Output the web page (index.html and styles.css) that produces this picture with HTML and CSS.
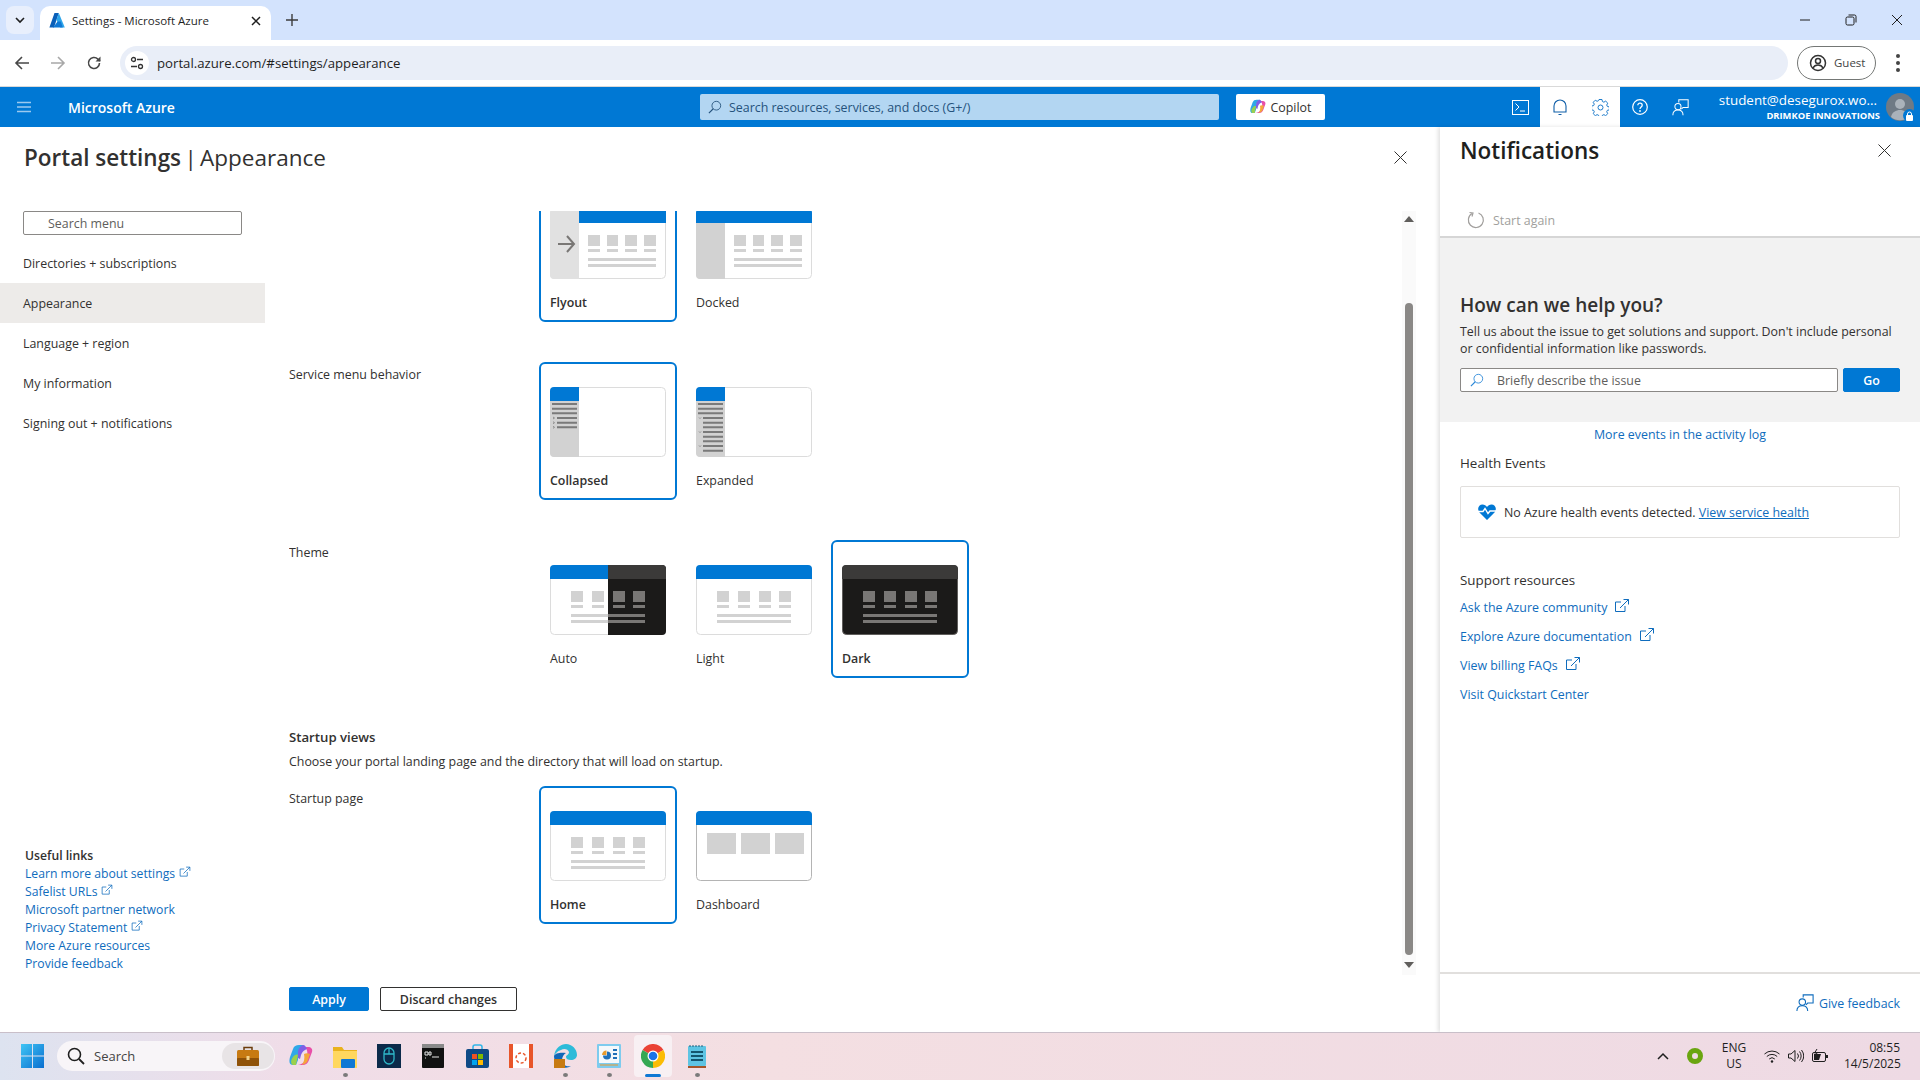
FILE: index.html
```html
<!DOCTYPE html>
<html lang="en">
<head>
  <meta charset="UTF-8">
  <title>Settings - Microsoft Azure</title>
  <link rel="stylesheet" href="styles.css">
</head>
<body>
  <svg class="defs" width="0" height="0">
    <symbol id="ext" viewBox="0 0 16 16">
      <path d="M11 8v5.5H1.5V4H7" fill="none" stroke="currentColor"/>
      <path d="M6 10 14.5 1.5M9.5 1.5h5v5" fill="none" stroke="currentColor"/>
    </symbol>
    <symbol id="lens" viewBox="0 0 16 16">
      <circle cx="9.5" cy="6.5" r="5" fill="none" stroke="currentColor"/>
      <path d="M6 10 1 15" fill="none" stroke="currentColor" stroke-width="1.3"/>
    </symbol>
    <symbol id="feedback" viewBox="0 0 20 20">
      <path d="M8 4V1h11v9h-6l-2 2" fill="none" stroke="currentColor" stroke-width="1.2"/>
      <circle cx="7" cy="9" r="3.6" fill="none" stroke="currentColor" stroke-width="1.2"/>
      <path d="M1 19c0-4 2.500-6 6-6s6 2 6 6" fill="none" stroke="currentColor" stroke-width="1.2"/>
    </symbol>
    <symbol id="copilot" viewBox="0 0 24 24">
      <path d="M10 1h5c-5 3-6 8-6 15l-2 5H4C0 21 0 17 1 13l3-8c1-3 3-4 6-4z" fill="#2fa8e8"/>
      <path d="M7 21h6c4 0 6-2 7-5l3-8c1-3-1-5-4-5h-3c3 3 3 8 1 12-2 4-5 6-10 6z" fill="#e84fa8"/>
      <path d="M9 9c0-4 2-7 5-8 2 0 3 2 4 4-3 1-5 3-6 6l-1 4-2-1z" fill="#7f5fe6"/>
      <path d="M4 13c1-2 4-3 5-2l-2 10H4c-3-1-2-6 0-8z" fill="#9bd04c"/>
      <path d="M15 10c2-1 4-1 6 0l-2 6c-1 3-3 4-6 5 2-3 3-7 2-11z" fill="#f4a63a"/>
    </symbol>

    <symbol id="blocks" viewBox="0 0 116 70">
      <path d="M21 26h12v11H21zM42 26h12v11H42zM63 26h12v11H63zM83 26h12v11H83zM21 40h12v3H21zM42 40h12v3H42zM63 40h12v3H63zM83 40h12v3H83zM21 49h74v3H21zM21 55h74v3H21z" fill="#d2d2d2"/>
    </symbol>
    <symbol id="blocks-side" viewBox="0 0 116 70">
      <path d="M38 26h12v11H38zM57 26h11v11H57zM75 26h12v11H75zM94 26h12v11H94zM38 40h12v3H38zM57 40h11v3H57zM75 40h12v3H75zM94 40h12v3H94zM38 49h68v3H38zM38 55h68v3H38z" fill="#d2d2d2"/>
    </symbol>
  </svg>

  <div class="page">
    <div class="tabstrip">
      <div class="tab-search">
        <svg width="12" height="12" viewBox="0 0 12 12"><path d="M2 4l4 4 4-4" fill="none" stroke="#1f1f1f" stroke-width="1.6"/></svg>
      </div>
      <div class="tab">
        <svg class="tab-icon" width="16" height="15" viewBox="0 0 16 15">
          <path d="M5.500 0h4.300L5 14.500H.4z" fill="#0a5fb8"/>
          <path d="M9.800 0 15.800 14.500h-4.600L7.400 6.800z" fill="#2fa6ea"/>
          <path d="M8.600 8.500h3.200l2 6H4z" fill="#0f78d4"/>
        </svg>
        <span class="tab-title">Settings - Microsoft Azure</span>
        <svg width="10" height="10" viewBox="0 0 10 10"><path d="M1 1l8 8M9 1 1 9" stroke="#1f1f1f" stroke-width="1.500"/></svg>
      </div>
      <svg class="new-tab" width="12" height="12" viewBox="0 0 12 12"><path d="M6 0v12M0 6h12" stroke="#3c3c3c" stroke-width="1.400"/></svg>
      <div class="win-buttons">
        <svg width="12" height="12" viewBox="0 0 12 12"><path d="M1 6h10" stroke="#1f1f1f"/></svg>
        <svg width="12" height="12" viewBox="0 0 12 12"><rect x="1" y="3" width="8" height="8" rx="1.500" fill="none" stroke="#1f1f1f"/><path d="M3.500 1H9.500a1.500 1.500 0 0 1 1.500 1.500V8.500" fill="none" stroke="#1f1f1f"/></svg>
        <svg width="12" height="12" viewBox="0 0 12 12"><path d="M1 1l10 10M11 1 1 11" stroke="#1f1f1f"/></svg>
      </div>
    </div>

    <div class="toolbar">
      <svg class="nav-btn" width="16" height="16" viewBox="0 0 16 16"><path d="M15 8H2M8 2 2 8l6 6" fill="none" stroke="#474747" stroke-width="1.600"/></svg>
      <svg class="nav-btn" width="16" height="16" viewBox="0 0 16 16"><path d="M1 8h13M8 2l6 6-6 6" fill="none" stroke="#a8a8a8" stroke-width="1.600"/></svg>
      <svg class="nav-btn" width="16" height="16" viewBox="0 0 16 16"><path d="M13.500 8a5.500 5.500 0 1 1-1.600-3.900L14 6" fill="none" stroke="#474747" stroke-width="1.600"/><path d="M14.500 1.500V6.500H9.500z" fill="#474747"/></svg>
      <div class="omnibox">
        <div class="site-icon">
          <svg width="14" height="14" viewBox="0 0 14 14"><circle cx="3.500" cy="3.500" r="2" fill="none" stroke="#333" stroke-width="1.300"/><path d="M7 3.500h6M1 10.500h6" stroke="#333" stroke-width="1.300"/><circle cx="10.500" cy="10.500" r="2" fill="none" stroke="#333" stroke-width="1.300"/></svg>
        </div>
        <span class="url">portal.azure.com/#settings/appearance</span>
      </div>
      <div class="guest">
        <svg width="18" height="18" viewBox="0 0 18 18"><circle cx="9" cy="9" r="7.500" fill="none" stroke="#333" stroke-width="1.500"/><circle cx="9" cy="7" r="2.500" fill="none" stroke="#333" stroke-width="1.500"/><path d="M4 14c1-2 3-3 5-3s4 1 5 3" fill="none" stroke="#333" stroke-width="1.500"/></svg>
        <span>Guest</span>
      </div>
      <div class="kebab"><i></i><i></i><i></i></div>
    </div>

    <header class="portal-bar">
      <svg class="burger" width="14" height="12" viewBox="0 0 14 12"><path d="M0 1.500h14M0 6h14M0 10.500h14" stroke="#9cc9ef" stroke-width="1.500"/></svg>
      <span class="brand">Microsoft Azure</span>
      <div class="global-search">
        <svg class="lens" width="14" height="14"><use href="#lens"/></svg>
        <span>Search resources, services, and docs (G+/)</span>
      </div>
      <div class="copilot-btn">
        <svg width="16" height="16"><use href="#copilot"/></svg>
        <span>Copilot</span>
      </div>
      <div class="bar-icons">
        <div class="bar-icon">
          <svg width="17" height="15" viewBox="0 0 17 15"><rect x=".5" y=".5" width="16" height="14" fill="none" stroke="#fff"/><path d="M3.500 3.500 7 7l-3.500 3.500M8 11h5" fill="none" stroke="#fff"/></svg>
        </div>
        <div class="bar-icon active">
          <svg width="14" height="17" viewBox="0 0 14 17"><path d="M1 13V7a6 6 0 0 1 12 0v6zM.5 13h13M5.500 15.500h3" fill="none" stroke="#0f5ea8" stroke-width="1.100"/></svg>
        </div>
        <div class="bar-icon active">
          <svg width="17" height="17" viewBox="0 0 17 17"><path d="M7 .5h3l.4 2 1.500.7 1.800-1.100 2.100 2.100-1.100 1.800.7 1.500 2 .4v3l-2 .4-.7 1.500 1.100 1.800-2.100 2.100-1.800-1.100-1.500.7-.4 2H7l-.4-2-1.500-.7-1.800 1.100-2.100-2.100 1.100-1.800-.7-1.500-2-.4V7l2-.4.7-1.500L1.200 3.300l2.100-2.100 1.800 1.100 1.500-.7z" fill="none" stroke="#1f7ccb"/><circle cx="8.500" cy="8.500" r="2.500" fill="none" stroke="#1f7ccb"/></svg>
        </div>
        <div class="bar-icon">
          <svg width="16" height="16" viewBox="0 0 16 16"><circle cx="8" cy="8" r="7.300" fill="none" stroke="#fff" stroke-width="1.200"/><path d="M5.800 6.200C5.800 3.500 10.200 3.500 10.200 6.200 10.200 8 8 8 8 10" fill="none" stroke="#fff" stroke-width="1.300"/><circle cx="8" cy="12" r=".9" fill="#fff"/></svg>
        </div>
        <div class="bar-icon">
          <svg width="17" height="17"><use href="#feedback"/></svg>
        </div>
      </div>
      <div class="account">
        <div class="account-text">
          <div class="account-mail">student@desegurox.wo...</div>
          <div class="account-org">DRIMKOE INNOVATIONS</div>
        </div>
        <div class="avatar">
          <svg width="28" height="28" viewBox="0 0 28 28"><circle cx="14" cy="14" r="14" fill="#6f7a85"/><circle cx="14" cy="11" r="5" fill="#aab2ba"/><path d="M5 24c1-5 5-7 9-7s8 2 9 7a14 14 0 0 1-18 0z" fill="#aab2ba"/></svg>
          <div class="lock">
            <svg width="9" height="10" viewBox="0 0 9 10"><rect x="1" y="4" width="7" height="6" rx="1" fill="#fff"/><path d="M2.500 4V3a2 2 0 0 1 4 0v1" fill="none" stroke="#fff"/></svg>
          </div>
        </div>
      </div>
    </header>

    <main class="workspace">
      <section class="blade">
        <div class="blade-head">
          <h1 class="blade-title"><b>Portal settings</b> | Appearance</h1>
          <svg class="blade-close" width="13" height="13" viewBox="0 0 13 13"><path d="M.5.500l12 12M12.500.500l-12 12" stroke="#323130"/></svg>
        </div>
        <div class="blade-body">
          <nav class="side">
            <div class="menu-search">Search menu</div>
            <a class="menu-item">Directories + subscriptions</a>
            <a class="menu-item selected">Appearance</a>
            <a class="menu-item">Language + region</a>
            <a class="menu-item">My information</a>
            <a class="menu-item">Signing out + notifications</a>
            <div class="useful">
              <div class="useful-title">Useful links</div>
              <a>Learn more about settings <svg width="12" height="12"><use href="#ext"/></svg></a>
              <a>Safelist URLs <svg width="12" height="12"><use href="#ext"/></svg></a>
              <a>Microsoft partner network</a>
              <a>Privacy Statement <svg width="12" height="12"><use href="#ext"/></svg></a>
              <a>More Azure resources</a>
              <a>Provide feedback</a>
            </div>
          </nav>

          <div class="content">
            <div class="scroller">
              <div class="scroll-inner">
                <div class="setting-row first">
                  <div class="setting-label"></div>
                  <div class="option on">
                    <svg class="thumb" viewBox="0 0 116 70">
                      <rect x=".5" y=".5" width="115" height="69" rx="4" fill="#fff" stroke="#dcdcdc"/>
                      <path d="M4 0h25v70H4a4 4 0 0 1-4-4V4a4 4 0 0 1 4-4z" fill="#e1e1e1"/>
                      <path d="M29 0h87v14H29z" fill="#0078d4"/>
                      <path d="M8 35h16M17 27l7 8-7 8" fill="none" stroke="#797775" stroke-width="2"/>
                      <use href="#blocks-side"/>
                    </svg>
                    <div class="option-name">Flyout</div>
                  </div>
                  <div class="option">
                    <svg class="thumb" viewBox="0 0 116 70">
                      <rect x=".5" y=".5" width="115" height="69" rx="4" fill="#fff" stroke="#dcdcdc"/>
                      <path d="M0 14h29v56H4a4 4 0 0 1-4-4z" fill="#d2d2d2"/>
                      <path d="M4 0h108a4 4 0 0 1 4 4v10H0V4a4 4 0 0 1 4-4z" fill="#0078d4"/>
                      <use href="#blocks-side"/>
                    </svg>
                    <div class="option-name">Docked</div>
                  </div>
                </div>

                <div class="setting-row">
                  <div class="setting-label">Service menu behavior</div>
                  <div class="option on">
                    <svg class="thumb" viewBox="0 0 116 70">
                      <rect x=".5" y=".5" width="115" height="69" rx="4" fill="#fff" stroke="#dcdcdc"/>
                      <path d="M0 14h29v56H4a4 4 0 0 1-4-4z" fill="#d2d2d2"/>
                      <path d="M4 0h25v14H0V4a4 4 0 0 1 4-4z" fill="#0078d4"/>
                      <path d="M2 17h25M2 21.700h25M2 26.300h25M7 31h20M7 35.700h20M7 40.300h20" stroke="#7a7a7a" stroke-width="2"/>
                      <path d="M3 30l1.500 1L3 32M3 34.700l1.500 1-1.500 1M3 39.300l1.500 1-1.500 1" fill="none" stroke="#7a7a7a" stroke-width=".8"/>
                    </svg>
                    <div class="option-name">Collapsed</div>
                  </div>
                  <div class="option">
                    <svg class="thumb" viewBox="0 0 116 70">
                      <rect x=".5" y=".5" width="115" height="69" rx="4" fill="#fff" stroke="#dcdcdc"/>
                      <path d="M0 14h29v56H4a4 4 0 0 1-4-4z" fill="#d2d2d2"/>
                      <path d="M4 0h25v14H0V4a4 4 0 0 1 4-4z" fill="#0078d4"/>
                      <path d="M2 17h25M2 21.700h25M2 26.300h25M7 31h20M7 35.700h20M7 40.300h20M7 45h20M7 49.700h20M7 54.300h20M7 59h20M7 63.700h20" stroke="#7a7a7a" stroke-width="2"/>
                      <path d="M3 30.500l1 1 1-1M3 44.500l1 1 1-1M3 58.500l1 1 1-1" fill="none" stroke="#7a7a7a" stroke-width=".8"/>
                    </svg>
                    <div class="option-name">Expanded</div>
                  </div>
                </div>

                <div class="setting-row">
                  <div class="setting-label">Theme</div>
                  <div class="option">
                    <svg class="thumb" viewBox="0 0 116 70">
                      <rect x=".5" y=".5" width="115" height="69" rx="4" fill="#fff" stroke="#dcdcdc"/>
                      <path d="M4 0h54v14H0V4a4 4 0 0 1 4-4z" fill="#0078d4"/>
                      <use href="#blocks"/>
                      <path d="M58 0h54a4 4 0 0 1 4 4v62a4 4 0 0 1-4 4H58z" fill="#1b1a19"/>
                      <path d="M58 0h54a4 4 0 0 1 4 4v10H58z" fill="#3b3a39"/>
                      <path d="M63 26h12v11H63zM83 26h12v11H83zM63 40h12v3H63zM83 40h12v3H83zM58 49h37v3H58zM58 55h37v3H58z" fill="#797775"/>
                    </svg>
                    <div class="option-name">Auto</div>
                  </div>
                  <div class="option">
                    <svg class="thumb" viewBox="0 0 116 70">
                      <rect x=".5" y=".5" width="115" height="69" rx="4" fill="#fff" stroke="#dcdcdc"/>
                      <path d="M4 0h108a4 4 0 0 1 4 4v10H0V4a4 4 0 0 1 4-4z" fill="#0078d4"/>
                      <use href="#blocks"/>
                    </svg>
                    <div class="option-name">Light</div>
                  </div>
                  <div class="option on">
                    <svg class="thumb" viewBox="0 0 116 70">
                      <rect x=".5" y=".5" width="115" height="69" rx="4" fill="#1b1a19" stroke="#605e5c"/>
                      <path d="M4 0h108a4 4 0 0 1 4 4v10H0V4a4 4 0 0 1 4-4z" fill="#3b3a39"/>
                      <path d="M21 26h12v11H21zM42 26h12v11H42zM63 26h12v11H63zM83 26h12v11H83zM21 40h12v3H21zM42 40h12v3H42zM63 40h12v3H63zM83 40h12v3H83zM21 49h74v3H21zM21 55h74v3H21z" fill="#797775"/>
                    </svg>
                    <div class="option-name">Dark</div>
                  </div>
                </div>

                <h3 class="section-title">Startup views</h3>
                <p class="section-desc">Choose your portal landing page and the directory that will load on startup.</p>

                <div class="setting-row">
                  <div class="setting-label">Startup page</div>
                  <div class="option on">
                    <svg class="thumb" viewBox="0 0 116 70">
                      <rect x=".5" y=".5" width="115" height="69" rx="4" fill="#fff" stroke="#dcdcdc"/>
                      <path d="M4 0h108a4 4 0 0 1 4 4v10H0V4a4 4 0 0 1 4-4z" fill="#0078d4"/>
                      <use href="#blocks"/>
                    </svg>
                    <div class="option-name">Home</div>
                  </div>
                  <div class="option">
                    <svg class="thumb" viewBox="0 0 116 70">
                      <rect x=".5" y=".5" width="115" height="69" rx="4" fill="#fff" stroke="#b4b4b4"/>
                      <path d="M4 0h108a4 4 0 0 1 4 4v10H0V4a4 4 0 0 1 4-4z" fill="#0078d4"/>
                      <path d="M11 22h29v21H11zM45 22h29v21H45zM79 22h29v21H79z" fill="#d2d2d2"/>
                    </svg>
                    <div class="option-name">Dashboard</div>
                  </div>
                </div>
              </div>
              <div class="scrollbar">
                <div class="arrow-up"></div>
                <div class="thumb-bar"></div>
                <div class="arrow-down"></div>
              </div>
            </div>
            <div class="actions">
              <button class="btn primary">Apply</button>
              <button class="btn">Discard changes</button>
            </div>
          </div>
        </div>
      </section>

      <aside class="notifications">
        <div class="notif-head">
          <div class="notif-top">
            <h2>Notifications</h2>
            <svg width="13" height="13" viewBox="0 0 13 13"><path d="M.5.500l12 12M12.500.500l-12 12" stroke="#323130"/></svg>
          </div>
          <div class="start-again">
            <svg width="18" height="18" viewBox="0 0 18 18"><path d="M11.500 2A7.500 7.500 0 1 1 5 2.600" fill="none" stroke="#a19f9d" stroke-width="1.200"/><path d="M2.500 1.500 6 2 5 5.500" fill="none" stroke="#a19f9d" stroke-width="1.200"/></svg>
            <span>Start again</span>
          </div>
        </div>
        <div class="help">
          <h3>How can we help you?</h3>
          <p>Tell us about the issue to get solutions and support. Don't include personal or confidential information like passwords.</p>
          <div class="help-form">
            <div class="help-input">
              <svg class="lens-blue" width="14" height="14"><use href="#lens"/></svg>
              <span>Briefly describe the issue</span>
            </div>
            <button class="btn primary go">Go</button>
          </div>
        </div>
        <div class="notif-body">
          <a class="more-events">More events in the activity log</a>
          <h4 class="first-h">Health Events</h4>
          <div class="health-box">
            <svg width="18" height="16" viewBox="0 0 18 16"><path d="M9 16 1.500 8.500C-1.500 4.500 1 .5 4.500.5 6.500.5 8 1.500 9 3c1-1.500 2.500-2.500 4.500-2.500 3.500 0 6 4 3 8z" fill="#0078d4"/><path d="M0 7.500h5l2-3 3 5 2-2.500h6" fill="none" stroke="#fff" stroke-width="1.400"/></svg>
            <span>No Azure health events detected. <a class="underlined">View service health</a></span>
          </div>
          <h4 class="support-h">Support resources</h4>
          <a class="support-link">Ask the Azure community <svg width="16" height="16"><use href="#ext"/></svg></a>
          <a class="support-link">Explore Azure documentation <svg width="16" height="16"><use href="#ext"/></svg></a>
          <a class="support-link">View billing FAQs <svg width="16" height="16"><use href="#ext"/></svg></a>
          <a class="support-link">Visit Quickstart Center</a>
        </div>
        <div class="notif-foot">
          <svg width="18" height="18"><use href="#feedback"/></svg>
          <span>Give feedback</span>
        </div>
      </aside>
    </main>

    <footer class="taskbar">
      <svg class="start" width="23" height="24" viewBox="0 0 23 24">
        <defs><linearGradient id="win" x1="0" y1="0" x2="1" y2="1"><stop offset="0" stop-color="#3fc4f4"/><stop offset="1" stop-color="#0a6fd0"/></linearGradient></defs>
        <path d="M0 0h11v11.500H0zM12 0h11v11.500H12zM0 12.500h11V24H0zM12 12.500h11V24H12z" fill="url(#win)"/>
      </svg>
      <div class="task-search">
        <svg width="18" height="18" viewBox="0 0 18 18"><circle cx="7.500" cy="7.500" r="6" fill="none" stroke="#1f1f1f" stroke-width="1.600"/><path d="M12 12l5 5" stroke="#1f1f1f" stroke-width="1.800"/></svg>
        <span>Search</span>
        <div class="case">
          <svg width="22" height="22" viewBox="0 0 22 22"><path d="M7 6V2.500h8V6" fill="none" stroke="#6b3d0c" stroke-width="1.500"/><rect y="5" width="22" height="16" rx="1.500" fill="#c77a12"/><rect y="13" width="22" height="8" rx="1" fill="#8f5208"/><rect x="9.500" y="11" width="3" height="4" fill="#f3d28a"/></svg>
        </div>
      </div>
      <div class="task-icons">
        <div class="task-icon"><svg width="24" height="24"><use href="#copilot"/></svg></div>
        <div class="task-icon dot">
          <svg width="24" height="24" viewBox="0 0 24 24"><path d="M0 3h9l2 3h13v17H0z" fill="#e9b21d"/><path d="M0 7h24v17H0z" fill="#ffd75e"/><rect x="8" y="15" width="14" height="9" rx="1" fill="#0f78d4"/></svg>
        </div>
        <div class="task-icon">
          <svg width="24" height="24" viewBox="0 0 24 24"><rect width="24" height="24" fill="#0b2a4a"/><rect x="7" y="4" width="10" height="16" rx="5" fill="none" stroke="#2fb8c9" stroke-width="1.300"/><path d="M12 4v6M7 10h10" stroke="#2fb8c9" stroke-width="1.300"/></svg>
        </div>
        <div class="task-icon">
          <svg width="22" height="24" viewBox="0 0 22 24"><rect width="22" height="24" rx="1" fill="#111"/><rect width="22" height="4" fill="#8a8a8a"/><path d="M3 8h3v3H3zM7 8h2v3H7zM3 14h1M10 13h7" stroke="#e6e6e6" fill="none"/></svg>
        </div>
        <div class="task-icon">
          <svg width="23" height="24" viewBox="0 0 23 24"><path d="M7 6V3a2 2 0 0 1 2-2h5a2 2 0 0 1 2 2v3" fill="none" stroke="#31b5e8" stroke-width="1.500"/><rect y="5" width="23" height="19" rx="2" fill="#0f4a86"/><path d="M6 10h5v5H6z" fill="#f25022"/><path d="M12 10h5v5h-5z" fill="#7fba00"/><path d="M6 16h5v5H6z" fill="#00a4ef"/><path d="M12 16h5v5h-5z" fill="#ffb900"/></svg>
        </div>
        <div class="task-icon">
          <svg width="24" height="24" viewBox="0 0 24 24"><rect width="24" height="24" fill="#fff"/><path d="M0 0h4v24H0zM20 0h4v24h-4z" fill="#e8552a"/><circle cx="12" cy="14" r="5" fill="none" stroke="#e8552a" stroke-width="1.500" stroke-dasharray="3 2"/></svg>
        </div>
        <div class="task-icon dot">
          <svg width="24" height="24" viewBox="0 0 24 24"><path d="M1 12C2 4 8 0 13 0c6 0 11 5 11 11 0 3-3 5-6 5-3 0-5-1-5-3 0-2 3-2 3-5-1-3-5-4-8-2-4 1-6 4-7 6z" fill="#2dbbd9"/><path d="M1 12c0 5 3 10 8 11 3 1 6 1 9-1-5 1-9-1-9-6 0-3 2-6 4-7-5-1-11 0-12 3z" fill="#1267b8"/><rect x="1" y="15" width="11" height="9" fill="#c77a12"/></svg>
        </div>
        <div class="task-icon dot">
          <svg width="24" height="24" viewBox="0 0 24 24"><rect width="24" height="24" rx="1" fill="#7ecbee"/><rect x="2" y="2" width="20" height="17" fill="#f4f8fb"/><path d="M5 11a4.500 4.500 0 0 1 4.500-4.500V11z" fill="#e89a2c"/><path d="M10 7.500a4 4 0 1 1-4 4h4z" fill="#1f6fb8"/><path d="M16 6h4M16 10h4M16 14h4" stroke="#1f6fb8" stroke-width="2"/><path d="M3 21h18" stroke="#e89a2c"/></svg>
        </div>
        <div class="task-icon running">
          <svg width="24" height="24" viewBox="0 0 24 24">
            <path d="M12 12 1.600 6A12 12 0 0 1 22.400 6z" fill="#ea4335"/>
            <path d="M12 12 22.400 6A12 12 0 0 1 12 24z" fill="#fbbc04"/>
            <path d="M12 12v12A12 12 0 0 1 1.600 6z" fill="#34a853"/>
            <circle cx="12" cy="12" r="5.500" fill="#fff"/><circle cx="12" cy="12" r="4.300" fill="#1a73e8"/>
          </svg>
        </div>
        <div class="task-icon dot">
          <svg width="18" height="24" viewBox="0 0 18 24"><rect y="2" width="18" height="20" rx="1" fill="#5ec4e3"/><path d="M2 1v2M5 1v2M8 1v2M11 1v2M14 1v2" stroke="#1f5f7a"/><path d="M3 8h12M3 12h12M3 16h12" stroke="#14566f" stroke-width="2"/><path d="M0 22h18v2H0z" fill="#a5562a"/></svg>
        </div>
      </div>
      <div class="tray">
        <svg class="tray-up" width="12" height="8" viewBox="0 0 12 8"><path d="M1 7l5-5 5 5" fill="none" stroke="#1f1f1f" stroke-width="1.500"/></svg>
        <svg class="tray-ring" width="16" height="16" viewBox="0 0 16 16"><circle cx="8" cy="8" r="5.500" fill="none" stroke="#6aa510" stroke-width="5"/></svg>
        <div class="lang">ENG<br>US</div>
        <svg width="16" height="14" viewBox="0 0 16 14"><path d="M.5 5a11 11 0 0 1 15 0M2.800 7.500a7.500 7.500 0 0 1 10.400 0M5.200 10a4 4 0 0 1 5.600 0" fill="none" stroke="#1f1f1f"/><circle cx="8" cy="12.500" r="1.200" fill="#1f1f1f"/></svg>
        <svg width="16" height="14" viewBox="0 0 16 14"><path d="M.5 5v4H3l4 3.500v-11L3 5z" fill="none" stroke="#1f1f1f"/><path d="M9.500 4.500a4 4 0 0 1 0 5M11.500 2.500a7 7 0 0 1 0 9M13.500 1a10 10 0 0 1 0 12" fill="none" stroke="#1f1f1f"/></svg>
        <svg width="16" height="14" viewBox="0 0 16 14"><rect x=".5" y="3.500" width="13" height="9" rx="1.500" fill="none" stroke="#1f1f1f"/><path d="M2 5h7l-2 6H2z" fill="#1f1f1f"/><path d="M14 6h2v3h-2z" fill="#1f1f1f"/><path d="M5 0 2.500 4H5L3.500 7" fill="none" stroke="#1f1f1f"/></svg>
        <div class="clock">08:55<br>14/5/2025</div>
      </div>
    </footer>
  </div>
</body>
</html>
```

FILE: styles.css
```css
* {
  box-sizing: border-box;
}
body {
  margin: 0;
  font-family: "Open Sans", "Liberation Sans", sans-serif;
  font-size: 12.4px;
  color: #323130;
  background-color: #fff;
}
a {
  color: #0f6cbd;
}
h1, h2, h3, h4, p {
  margin: 0;
  font-weight: 400;
}
.defs {
  position: absolute;
}
.page {
  display: flex;
  flex-direction: column;
  height: 100vh;
  overflow: hidden;
}

/* browser */
.tabstrip {
  display: flex;
  align-items: flex-end;
  height: 40px;
  flex: none;
  background-color: #d3e3fd;
}
.tab-search {
  display: flex;
  align-items: center;
  justify-content: center;
  width: 28px;
  height: 28px;
  margin: 0 6px 6px 6px;
  border-radius: 8px;
  background-color: #e8effc;
}
.tab {
  display: flex;
  align-items: center;
  width: 231px;
  height: 34px;
  padding: 0 10px 5px 9px;
  background-color: #fff;
  border-radius: 10px 10px 0 0;
}
.tab-title {
  flex: 1;
  margin-left: 7px;
  font-size: 11.5px;
  color: #1f1f1f;
}
.new-tab {
  margin: 0 0 14px 15px;
}
.win-buttons {
  display: flex;
  gap: 34px;
  margin: 0 17px 14px auto;
}
.toolbar {
  display: flex;
  align-items: center;
  height: 47px;
  flex: none;
  padding: 0 0 1px 14px;
  background-color: #fff;
  border-bottom: 1px solid #d9d9d9;
}
.nav-btn {
  margin-right: 20px;
}
.omnibox {
  display: flex;
  align-items: center;
  width: 1668px;
  height: 34px;
  margin-left: -2px;
  padding-left: 5px;
  border-radius: 17px;
  background-color: #e9eef8;
}
.site-icon {
  display: flex;
  align-items: center;
  justify-content: center;
  width: 24px;
  height: 24px;
  border-radius: 50%;
  background-color: #fff;
}
.url {
  margin-left: 8px;
  font-size: 13.2px;
  color: #1f1f1f;
}
.guest {
  display: flex;
  align-items: center;
  gap: 7px;
  width: 79px;
  height: 34px;
  margin-left: 9px;
  padding-left: 11px;
  border: 1px solid #747775;
  border-radius: 17px;
  font-size: 11.5px;
  color: #444;
}
.kebab {
  display: flex;
  flex-direction: column;
  gap: 3px;
  margin-left: 20px;
}
.kebab i {
  width: 4px;
  height: 4px;
  border-radius: 50%;
  background-color: #444;
}

/* azure top bar */
.portal-bar {
  display: flex;
  align-items: center;
  height: 40px;
  flex: none;
  padding-left: 17px;
  background-color: #0078d4;
  color: #fff;
}
.brand {
  margin-left: 37px;
  width: 632px;
  font-size: 14px;
  font-weight: 600;
}
.burger {
  flex: none;
}
.global-search {
  display: flex;
  align-items: center;
  gap: 7px;
  width: 519px;
  height: 26px;
  padding-left: 8px;
  border-radius: 2px;
  background-color: #b3d6f2;
  color: #25527c;
}
.lens {
  color: #25527c;
}
.copilot-btn {
  display: flex;
  align-items: center;
  justify-content: center;
  gap: 5px;
  width: 89px;
  height: 26px;
  margin-left: 17px;
  border-radius: 2px;
  background-color: #fff;
  color: #323130;
  font-weight: 500;
}
.bar-icons {
  display: flex;
  margin-left: 175px;
}
.bar-icon {
  display: flex;
  align-items: center;
  justify-content: center;
  width: 40px;
  height: 40px;
  color: #fff;
}
.bar-icon.active {
  background-color: #fff;
}
.account {
  display: flex;
  align-items: center;
  flex: 1;
  justify-content: flex-end;
  padding-right: 6px;
}
.account-text {
  text-align: right;
  margin-right: 6px;
}
.account-mail {
  font-size: 13.4px;
  line-height: 16px;
  margin-right: 3px;
}
.account-org {
  font-size: 9.4px;
  font-weight: 700;
  line-height: 15px;
}
.avatar {
  position: relative;
  width: 28px;
  height: 28px;
}
.lock {
  position: absolute;
  right: -2px;
  bottom: -1px;
  display: flex;
  align-items: center;
  justify-content: center;
  width: 13px;
  height: 13px;
  border-radius: 50%;
  background-color: #0078d4;
}

/* layout */
.workspace {
  display: flex;
  flex: 1;
  min-height: 0;
}
.blade {
  display: flex;
  flex-direction: column;
  width: 1440px;
}
.blade-head {
  display: flex;
  align-items: flex-start;
  justify-content: space-between;
  height: 84px;
  padding: 16px 33px 0 24px;
}
.blade-title {
  font-size: 22.5px;
  line-height: 30px;
  word-spacing: -2.5px;
  color: #323130;
}
.blade-title b {
  font-weight: 600;
  word-spacing: 0;
}
.blade-close {
  margin-top: 8px;
}
.blade-body {
  display: flex;
  flex: 1;
  min-height: 0;
}
.side {
  display: flex;
  flex-direction: column;
  width: 265px;
  flex: none;
}
.menu-search {
  width: 219px;
  height: 24px;
  margin: 0 0 8px 23px;
  padding-left: 24px;
  line-height: 24px;
  border: 1px solid #8a8886;
  border-radius: 2px;
  color: #605e5c;
}
.menu-item {
  height: 40px;
  padding-left: 23px;
  line-height: 41px;
  color: #323130;
}
.menu-item.selected {
  background-color: #edebe9;
}
.useful {
  display: flex;
  flex-direction: column;
  margin-top: auto;
  padding: 0 0 59px 25px;
  font-size: 12.2px;
  line-height: 18px;
}
.useful a {
  display: flex;
  align-items: center;
  gap: 4px;
}
.useful svg {
  margin-top: -5px;
}
.useful-title {
  font-weight: 600;
}
.content {
  display: flex;
  flex-direction: column;
  flex: 1;
  min-width: 0;
  padding: 0 24px;
}
.scroller {
  display: flex;
  height: 764px;
  flex: none;
}
.scroll-inner {
  flex: 1;
  overflow: hidden;
}

/* cards */
.setting-row {
  display: flex;
  margin-bottom: 40px;
}
.setting-row.first {
  margin-top: -27px;
}
.setting-label {
  width: 250px;
  flex: none;
  line-height: 26px;
}
.option {
  width: 138px;
  height: 138px;
  margin-right: 8px;
  padding: 23px 9px 0;
  border: 2px solid transparent;
  border-radius: 6px;
}
.option.on {
  border-color: #0078d4;
}
.option.on .option-name {
  font-weight: 600;
}
.thumb {
  display: block;
  width: 116px;
  height: 70px;
}
.option-name {
  margin-top: 15px;
  line-height: 18px;
}
.section-title {
  margin-top: 50px;
  font-size: 13.2px;
  line-height: 18px;
  font-weight: 600;
}
.section-desc {
  margin: 7px 0 15px;
  line-height: 18px;
}
.scrollbar {
  display: flex;
  flex-direction: column;
  align-items: center;
  width: 14px;
  flex: none;
  background-color: #fafafa;
}
.arrow-up {
  margin-top: 5px;
  border: 5px solid transparent;
  border-top: 0;
  border-bottom: 6px solid #605e5c;
}
.thumb-bar {
  width: 8px;
  height: 652px;
  margin-top: 81px;
  border-radius: 4px;
  background-color: #8a8886;
}
.arrow-down {
  margin-top: 7px;
  border: 5px solid transparent;
  border-bottom: 0;
  border-top: 6px solid #605e5c;
}
.actions {
  display: flex;
  gap: 11px;
  margin-top: 12px;
}
.btn {
  height: 24px;
  padding: 0;
  border: 1px solid #323130;
  border-radius: 2px;
  background-color: #fff;
  color: #323130;
  font-family: inherit;
  font-size: 12.4px;
  font-weight: 600;
  width: 137px;
}
.btn.primary {
  width: 80px;
  border-color: #0078d4;
  background-color: #0078d4;
  color: #fff;
}

/* notifications */
.notifications {
  display: flex;
  flex-direction: column;
  width: 480px;
  flex: none;
  box-shadow: -2px 0 4px rgba(0, 0, 0, 0.12);
}
.notif-head {
  height: 111px;
  flex: none;
  border-bottom: 2px solid #d6d6d6;
}
.notif-top {
  display: flex;
  align-items: center;
  justify-content: space-between;
  height: 46px;
  padding: 0 29px 0 20px;
}
.notif-top h2 {
  font-size: 22.5px;
  font-weight: 600;
  color: #201f1e;
}
.start-again {
  display: flex;
  align-items: center;
  gap: 8px;
  margin: 38px 0 0 27px;
  color: #a19f9d;
}
.help {
  height: 184px;
  flex: none;
  padding: 54px 20px 0;
  background-color: #f2f2f2;
}
.help h3 {
  font-size: 19px;
  line-height: 26px;
  font-weight: 600;
  color: #323130;
}
.help p {
  margin-top: 5px;
  line-height: 17px;
}
.help-form {
  display: flex;
  gap: 5px;
  margin-top: 11px;
}
.help-input {
  display: flex;
  align-items: center;
  gap: 13px;
  flex: 1;
  height: 24px;
  padding-left: 9px;
  border: 1px solid #8a8886;
  border-radius: 2px;
  background-color: #fff;
  color: #605e5c;
}
.lens-blue {
  color: #2b88d8;
}
.btn.go {
  width: 57px;
  padding: 0;
}
.notif-body {
  display: flex;
  flex-direction: column;
  flex: 1;
  padding: 0 20px;
}
.notif-body a {
  color: #0f6cbd;
}
.more-events {
  margin-top: 4px;
  line-height: 18px;
  text-align: center;
}
.notif-body h4 {
  font-size: 13.4px;
  line-height: 18px;
  font-weight: 500;
  color: #323130;
}
.first-h {
  margin-top: 10px;
}
.health-box {
  display: flex;
  align-items: center;
  gap: 8px;
  height: 52px;
  margin-top: 14px;
  padding-left: 17px;
  border: 1px solid #e1dfdd;
  border-radius: 2px;
}
.underlined {
  text-decoration: underline;
}
.support-h {
  margin: 33px 0 10px;
}
.support-link {
  display: flex;
  align-items: center;
  gap: 7px;
  line-height: 18px;
  margin-bottom: 11px;
}
.support-link svg {
  margin-top: -5px;
}
.notif-foot {
  display: flex;
  align-items: center;
  justify-content: flex-end;
  gap: 5px;
  height: 60px;
  flex: none;
  padding-right: 20px;
  border-top: 2px solid #e1dfdd;
  color: #0f6cbd;
}

/* windows taskbar */
.taskbar {
  display: flex;
  align-items: center;
  height: 48px;
  flex: none;
  padding: 0 0 2px 21px;
  border-top: 1px solid #c9bfc9;
  background: linear-gradient(90deg, #dde3f0 0%, #f0dde8 15%, #f4dfe2 40%, #eedae4 100%);
}
.task-search {
  display: flex;
  align-items: center;
  gap: 9px;
  width: 218px;
  height: 30px;
  margin-left: 13px;
  padding-left: 10px;
  border-radius: 15px;
  background-color: #f8f5f8;
  color: #444;
  font-size: 13px;
}
.case {
  display: flex;
  align-items: center;
  justify-content: center;
  width: 52px;
  height: 26px;
  margin-left: auto;
  margin-right: 1px;
  border-radius: 13px;
  background-color: #e8e4e6;
}
.task-icons {
  display: flex;
  margin-left: 4px;
}
.task-icon {
  position: relative;
  display: flex;
  align-items: center;
  justify-content: center;
  width: 44px;
  height: 42px;
}
.task-icon.dot::after {
  content: "";
  position: absolute;
  left: 20px;
  bottom: 0;
  width: 5px;
  height: 4px;
  border-radius: 50%;
  background-color: #7a7a7a;
}
.task-icon.running {
  margin: 0 3px;
  width: 38px;
  background-color: #f8f0f3;
  border-radius: 4px;
}
.task-icon.running::after {
  content: "";
  position: absolute;
  left: 11px;
  bottom: 0;
  width: 16px;
  height: 3px;
  border-radius: 2px;
  background-color: #0f78d4;
}
.tray {
  display: flex;
  align-items: center;
  gap: 8px;
  margin-left: auto;
  padding-right: 20px;
  font-size: 12px;
  color: #1f1f1f;
}
.tray-up {
  margin-right: 10px;
}
.tray-ring {
  margin-right: 8px;
}
.lang {
  width: 30px;
  margin-right: 7px;
  text-align: center;
  line-height: 16px;
}
.clock {
  width: 56px;
  margin-left: 8px;
  text-align: right;
  line-height: 16px;
  white-space: nowrap;
}
```
